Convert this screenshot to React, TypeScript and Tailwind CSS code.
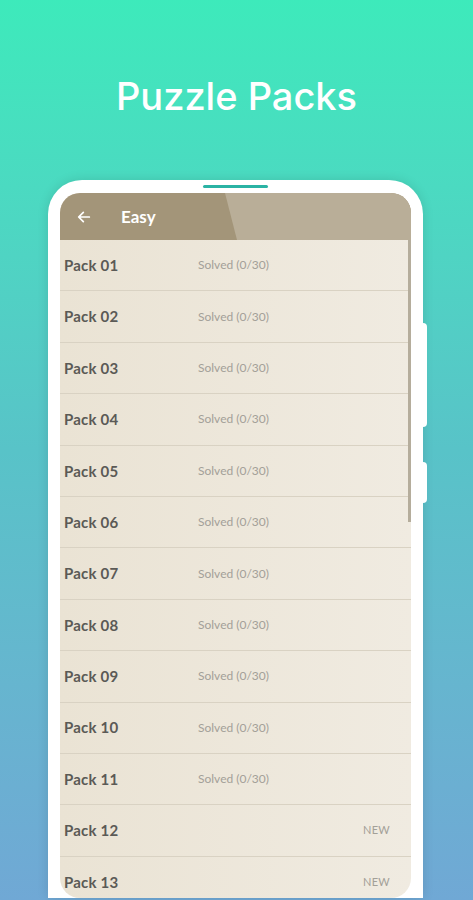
import React from 'react';

const packs = [
  { name: 'Pack 01', status: 'Solved (0/30)' },
  { name: 'Pack 02', status: 'Solved (0/30)' },
  { name: 'Pack 03', status: 'Solved (0/30)' },
  { name: 'Pack 04', status: 'Solved (0/30)' },
  { name: 'Pack 05', status: 'Solved (0/30)' },
  { name: 'Pack 06', status: 'Solved (0/30)' },
  { name: 'Pack 07', status: 'Solved (0/30)' },
  { name: 'Pack 08', status: 'Solved (0/30)' },
  { name: 'Pack 09', status: 'Solved (0/30)' },
  { name: 'Pack 10', status: 'Solved (0/30)' },
  { name: 'Pack 11', status: 'Solved (0/30)' },
  { name: 'Pack 12', isNew: true },
  { name: 'Pack 13', isNew: true },
];

const App = () => {
  return (
    <div className="flex h-[900px] w-full flex-col items-center overflow-hidden bg-gradient-to-b from-[#3deabb] via-[#58c3c8] to-[#70a8d5] font-['Lato',sans-serif]">
      <h1 className="pt-[73px] text-center font-['Inter',sans-serif] text-[38px] font-medium leading-[46px] text-white">
        Puzzle Packs
      </h1>

      {/* phone */}
      <div className="relative mt-[61px] flex w-[375px] -translate-x-[1px] flex-col items-center rounded-t-[34px] bg-white px-[12px] pt-[5px] shadow-[0_0_12px_rgba(0,0,0,0.12)]">
        <div className="h-[3px] w-[65px] rounded-full bg-[#2bb3a4]" />
        <div className="absolute -right-[4px] top-[143px] h-[104px] w-[4px] rounded-r-sm bg-white" />
        <div className="absolute -right-[4px] top-[282px] h-[41px] w-[4px] rounded-r-sm bg-white" />

        <div className="relative mt-[5px] h-[705px] w-full overflow-hidden rounded-[20px] bg-gradient-to-r from-[#eae3d4] to-[#f0ebe1]">
          {/* header */}
          <div className="relative flex h-[47px] items-center bg-[#a39579]">
            <div className="absolute inset-y-0 left-[165px] right-0 bg-[#b9ae98] [clip-path:polygon(0_0,100%_0,100%_100%,12px_100%)]" />
            <svg className="relative ml-[16px] h-[16px] w-[16px]" viewBox="0 0 24 24" fill="none" stroke="white" strokeWidth="2.6" strokeLinecap="round" strokeLinejoin="round">
              <path d="M20 12H5M11 5l-7 7 7 7" />
            </svg>
            <span className="relative ml-[29px] text-[17px] font-bold text-white">Easy</span>
          </div>

          {/* list */}
          <div className="flex flex-col">
            {packs.map((p) => (
              <div key={p.name} className="flex h-[51.4px] shrink-0 items-center border-b border-[#d9d2c3] pl-[4px] pr-[21px]">
                <span className="w-[134px] text-[15px] font-bold tracking-[0.2px] text-[#5b5a56]">{p.name}</span>
                <span className="flex-1 text-[12px] text-[#a3a098]">{p.status}</span>
                {p.isNew && <span className="text-[11px] tracking-[0.3px] text-[#a3a098]">NEW</span>}
              </div>
            ))}
          </div>

          <div className="absolute right-0 top-[47px] h-[282px] w-[3px] bg-[#b5ad9c]" />
        </div>
      </div>
    </div>
  );
};

export default App;
